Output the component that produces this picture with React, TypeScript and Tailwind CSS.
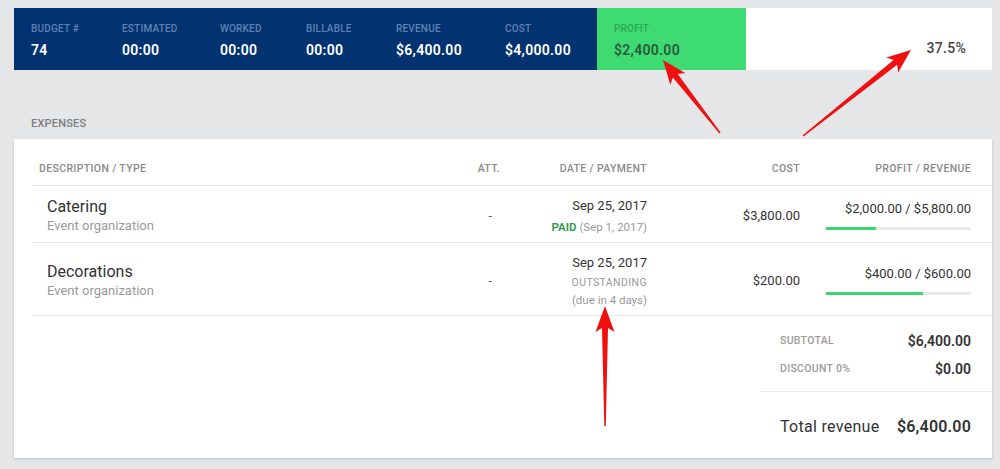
import React from 'react'

type Pt = [number, number]

// tapered annotation arrow, thin tail -> wide neck -> head
function arrowPoints(tail: Pt, tip: Pt, hl = 20, hw = 19, sw = 6, tw = 1.5) {
    const dx = tip[0] - tail[0]
    const dy = tip[1] - tail[1]
    const len = Math.hypot(dx, dy)
    const ux = dx / len
    const uy = dy / len
    const nx = -uy
    const ny = ux
    const neck: Pt = [tip[0] - ux * hl, tip[1] - uy * hl]
    const barb: Pt = [neck[0] - ux * 4, neck[1] - uy * 4]
    const pts: Pt[] = [
        [tail[0] + nx * tw / 2, tail[1] + ny * tw / 2],
        [neck[0] + nx * sw / 2, neck[1] + ny * sw / 2],
        [barb[0] + nx * hw / 2, barb[1] + ny * hw / 2],
        tip,
        [barb[0] - nx * hw / 2, barb[1] - ny * hw / 2],
        [neck[0] - nx * sw / 2, neck[1] - ny * sw / 2],
        [tail[0] - nx * tw / 2, tail[1] - ny * tw / 2],
    ]
    return pts.map(p => `${p[0].toFixed(1)},${p[1].toFixed(1)}`).join(' ')
}

const stats = [
    { label: 'BUDGET #', value: '74', w: 'w-[91px]' },
    { label: 'ESTIMATED', value: '00:00', w: 'w-[98px]' },
    { label: 'WORKED', value: '00:00', w: 'w-[86px]' },
    { label: 'BILLABLE', value: '00:00', w: 'w-[90px]' },
    { label: 'REVENUE', value: '$6,400.00', w: 'w-[109px]' },
    { label: 'COST', value: '$4,000.00', w: 'w-[92px]' },
]

function Bar({ pct }: { pct: number }) {
    return (
        <div className="w-[145px] h-[3px] bg-[#e9e9e9] mt-[10px] ml-auto">
            <div className="h-full bg-[#3fd472]" style={{ width: `${pct}%` }} />
        </div>
    )
}

export default function App() {
    return (
        <div className="relative w-[1000px] h-[469px] bg-[#e4e6e7] overflow-hidden text-[#333]" style={{ fontFamily: 'Roboto, "Liberation Sans", sans-serif' }}>
            <div className="pt-[8px] px-[14px]">
                {/* summary bar */}
                <div className="flex h-[62px] w-[978px]">
                    <div className="flex bg-[#033270] pl-[17px] w-[583px]">
                        {stats.map(s => (
                            <div key={s.label} className={`${s.w} pt-[15px]`}>
                                <div className="text-[10px] leading-[12px] font-medium text-[#5f82b3] tracking-[0.2px]">{s.label}</div>
                                <div className="text-[14px] leading-[18px] mt-[6px] font-semibold text-white tracking-[0.3px]">{s.value}</div>
                            </div>
                        ))}
                    </div>
                    <div className="bg-[#3ddb72] w-[149px] pl-[17px] pt-[15px]">
                        <div className="text-[10px] leading-[12px] font-medium text-[#2fa659] tracking-[0.2px]">PROFIT</div>
                        <div className="text-[14px] leading-[18px] mt-[6px] font-semibold text-[#2a5a3b] tracking-[0.3px]">$2,400.00</div>
                    </div>
                    <div className="bg-white flex-1 flex justify-end pr-[26px] pt-[31px]">
                        <span className="text-[14px] leading-[18px] font-medium text-[#444] tracking-[0.3px]">37.5%</span>
                    </div>
                </div>

                <div className="pl-[17px] pt-[46px] h-[69px] text-[11px] font-medium text-[#7d7d7d] tracking-[0.2px]">EXPENSES</div>

                {/* expenses card */}
                <div className="bg-white w-[978px] h-[319px] shadow-[0_1px_2px_rgba(0,0,0,0.18)] pl-[19px] flex flex-col">
                    <div className="flex h-[47px] items-end pb-[8px] border-b border-[#e6e6e6] text-[10.5px] font-medium text-[#8a8a8a] tracking-[0.35px]">
                        <div className="flex-1 pl-[6px]">DESCRIPTION / TYPE</div>
                        <div className="w-[60px] text-right">ATT.</div>
                        <div className="w-[147px] text-right">DATE / PAYMENT</div>
                        <div className="w-[153px] text-right">COST</div>
                        <div className="w-[192px] text-right pr-[21px]">PROFIT / REVENUE</div>
                    </div>

                    <div className="flex h-[57px] pt-[3px] items-center border-b border-[#e6e6e6]">
                        <div className="flex-1 pl-[14px]">
                            <div className="text-[16px] leading-[19px] text-[#333]">Catering</div>
                            <div className="text-[13px] leading-[16px] mt-[2px] text-[#9a9a9a]">Event organization</div>
                        </div>
                        <div className="w-[60px] text-right pr-[8px] text-[13px] text-[#666]">-</div>
                        <div className="w-[147px] text-right">
                            <div className="text-[13px] leading-[16px] text-[#333]">Sep 25, 2017</div>
                            <div className="text-[11.5px] leading-[14px] mt-[6px] text-[#9a9a9a]"><span className="font-semibold text-[#2e9a4c]">PAID</span> (Sep 1, 2017)</div>
                        </div>
                        <div className="w-[153px] text-right text-[13px] text-[#333]">$3,800.00</div>
                        <div className="w-[192px] pr-[21px] text-right">
                            <div className="text-[13px] leading-[16px] text-[#333]">$2,000.00 / $5,800.00</div>
                            <Bar pct={34.5} />
                        </div>
                    </div>

                    <div className="flex h-[73px] pt-[3px] items-center border-b border-[#e6e6e6]">
                        <div className="flex-1 pl-[14px]">
                            <div className="text-[16px] leading-[19px] text-[#333]">Decorations</div>
                            <div className="text-[13px] leading-[16px] mt-[2px] text-[#9a9a9a]">Event organization</div>
                        </div>
                        <div className="w-[60px] text-right pr-[8px] text-[13px] text-[#666]">-</div>
                        <div className="w-[147px] text-right">
                            <div className="text-[13px] leading-[16px] text-[#333]">Sep 25, 2017</div>
                            <div className="text-[10.5px] leading-[14px] mt-[5px] text-[#9a9a9a] tracking-[0.4px]">OUTSTANDING</div>
                            <div className="text-[11.5px] leading-[14px] mt-[3px] text-[#9a9a9a]">(due in 4 days)</div>
                        </div>
                        <div className="w-[153px] text-right text-[13px] text-[#333]">$200.00</div>
                        <div className="w-[192px] pr-[21px] text-right">
                            <div className="text-[13px] leading-[16px] text-[#333]">$400.00 / $600.00</div>
                            <Bar pct={66.7} />
                        </div>
                    </div>

                    {/* totals */}
                    <div className="ml-auto w-[232px] flex flex-col">
                        <div className="pl-[20px] pr-[21px] pt-[16px] h-[76px] border-b border-[#ececec]">
                            <div className="flex justify-between items-center h-[18px]">
                                <span className="text-[10.5px] font-medium text-[#9a9a9a] tracking-[0.3px]">SUBTOTAL</span>
                                <span className="text-[14px] font-semibold text-[#333]">$6,400.00</span>
                            </div>
                            <div className="flex justify-between items-center h-[18px] mt-[10px]">
                                <span className="text-[10.5px] font-medium text-[#9a9a9a] tracking-[0.3px]">DISCOUNT 0%</span>
                                <span className="text-[14px] font-semibold text-[#333]">$0.00</span>
                            </div>
                        </div>
                        <div className="pl-[20px] pr-[21px] pt-[23px] flex justify-between items-center">
                            <span className="text-[16px] text-[#333] tracking-[0.3px]">Total revenue</span>
                            <span className="text-[16px] font-semibold text-[#333] tracking-[0.2px]">$6,400.00</span>
                        </div>
                    </div>
                </div>
            </div>

            {/* annotation arrows */}
            <svg className="absolute inset-0 pointer-events-none" width="1000" height="469" viewBox="0 0 1000 469">
                <polygon points={arrowPoints([720, 133], [663, 60])} fill="#f01010" />
                <polygon points={arrowPoints([803, 136], [911, 50])} fill="#f01010" />
                <polygon points={arrowPoints([605, 426], [605, 306], 22, 19, 6, 1.5)} fill="#f01010" />
            </svg>
        </div>
    )
}
